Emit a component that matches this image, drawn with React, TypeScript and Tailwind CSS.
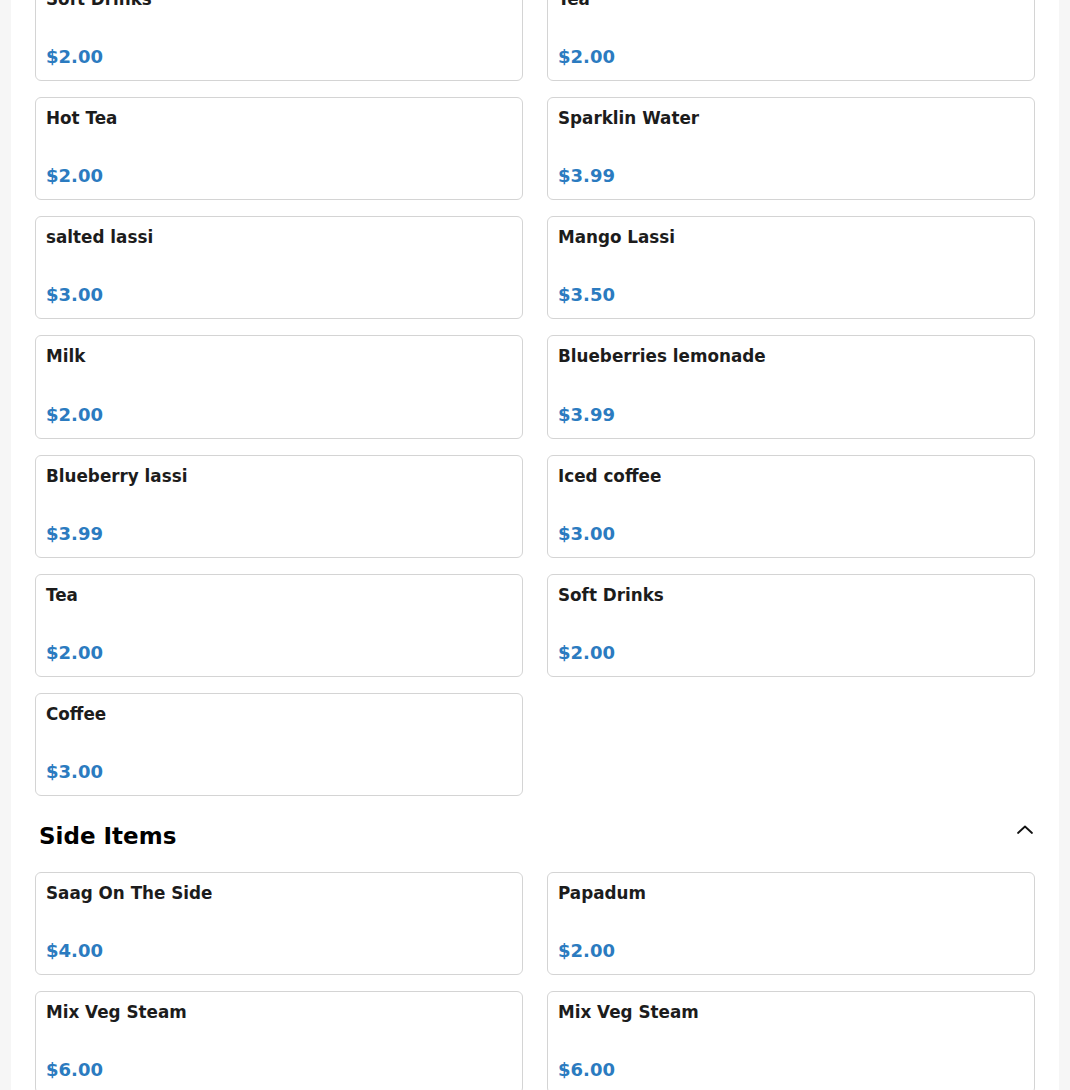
import React from "react";

type Item = {
  name: string;
  price: string;
};

type Section = {
  title: string;
  items: Item[];
};

const beverages: Item[] = [
  { name: "Soft Drinks", price: "$2.00" },
  { name: "Tea", price: "$2.00" },
  { name: "Hot Tea", price: "$2.00" },
  { name: "Sparklin Water", price: "$3.99" },
  { name: "salted lassi", price: "$3.00" },
  { name: "Mango Lassi", price: "$3.50" },
  { name: "Milk", price: "$2.00" },
  { name: "Blueberries lemonade", price: "$3.99" },
  { name: "Blueberry lassi", price: "$3.99" },
  { name: "Iced coffee", price: "$3.00" },
  { name: "Tea", price: "$2.00" },
  { name: "Soft Drinks", price: "$2.00" },
  { name: "Coffee", price: "$3.00" },
];

const sideItems: Section = {
  title: "Side Items",
  items: [
    { name: "Saag On The Side", price: "$4.00" },
    { name: "Papadum", price: "$2.00" },
    { name: "Mix Veg Steam", price: "$6.00" },
    { name: "Mix Veg Steam", price: "$6.00" },
  ],
};

const MenuCard = ({ item }: { item: Item }) => (
  <div className="rounded-md border border-[#d4d4d4] bg-white p-[10px]">
    <h3 className="text-[16.8px] font-bold leading-[20px] text-[#1c1c1c]">
      {item.name}
    </h3>
    <p className="mt-[34.2px] text-lg font-bold leading-[27px] text-[#2b7bc0]">
      {item.price}
    </p>
  </div>
);

const ItemGrid = ({ items }: { items: Item[] }) => (
  <div className="grid grid-cols-2 gap-x-6 gap-y-4">
    {items.map((item, i) => (
      <MenuCard key={`${item.name}-${i}`} item={item} />
    ))}
  </div>
);

const App = () => {
  return (
    <div
      className="min-h-screen overflow-hidden bg-[#f6f6f6] px-[11px]"
      style={{ fontFamily: '"DejaVu Sans", sans-serif' }}
    >
      <div className="min-h-screen bg-white px-6 pb-10">
        {/* page is scrolled: first row sits partly above the top edge */}
        <div className="-mt-[22.2px]">
          <ItemGrid items={beverages} />
        </div>

        <div className="mt-[26.8px] mb-[23.2px] flex items-start justify-between pl-1">
          <h2 className="text-[23px] font-bold leading-[normal] text-black">
            {sideItems.title}
          </h2>
          <svg
            width="20"
            height="20"
            viewBox="0 0 20 20"
            fill="none"
            stroke="#111"
            strokeWidth="1.8"
            strokeLinecap="round"
            strokeLinejoin="round"
          >
            <polyline points="3,10 10,3.5 17,10" />
          </svg>
        </div>

        <ItemGrid items={sideItems.items} />
      </div>
    </div>
  );
};

export default App;
